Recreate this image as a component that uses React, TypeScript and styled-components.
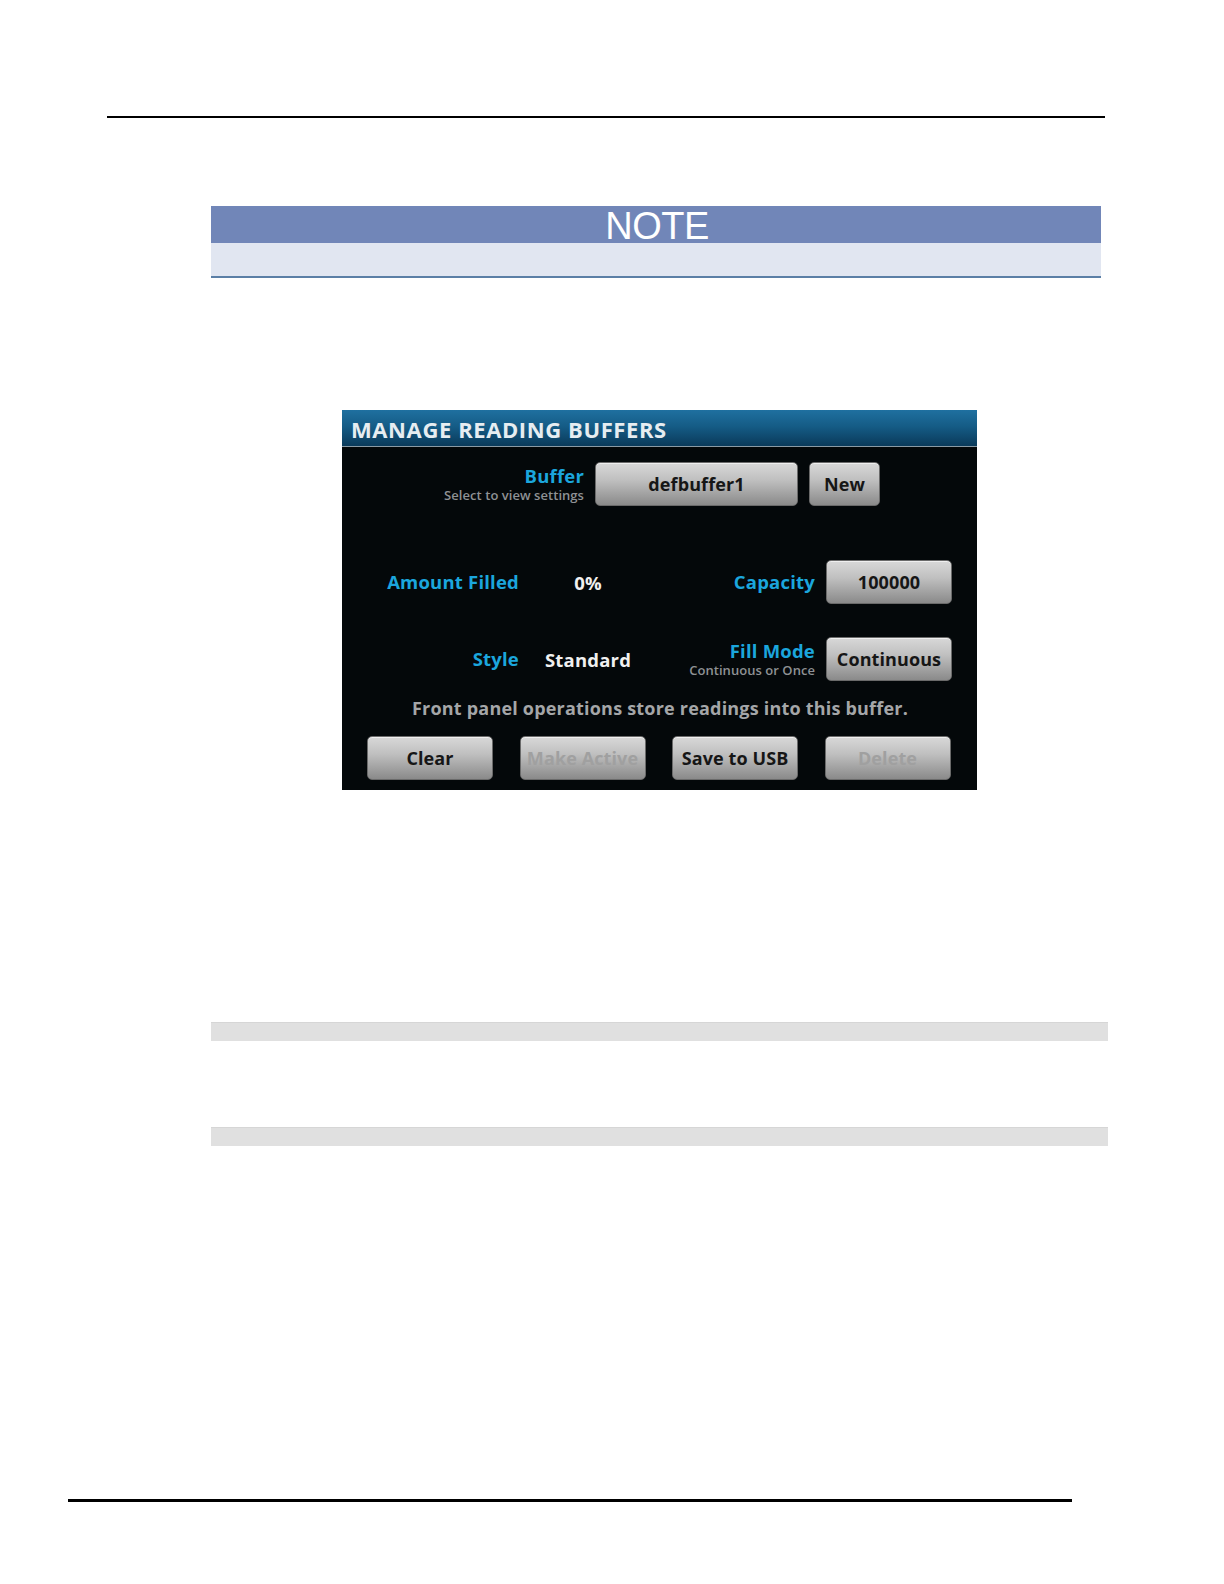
import * as React from 'react';
import styled, { createGlobalStyle } from 'styled-components';

const GlobalStyle = createGlobalStyle`
  html, body {
    margin: 0;
    padding: 0;
    background: #ffffff;
    overflow: hidden;
  }
`;

const Page = styled.div`
  width: 1224px;
  height: 1584px;
  display: flex;
  flex-direction: column;
  background: #fff;
  overflow: hidden;
  font-family: 'Liberation Sans', Arial, sans-serif;
`;

const Rule = styled.div<{ $top: number; $left: number; $width: number; $thick: number }>`
  margin-top: ${(p) => p.$top}px;
  margin-left: ${(p) => p.$left}px;
  width: ${(p) => p.$width}px;
  height: ${(p) => p.$thick}px;
  flex-shrink: 0;
  background: #000;
`;

const NoteBox = styled.div`
  margin-top: 88px;
  margin-left: 211px;
  width: 890px;
  flex-shrink: 0;
  border-bottom: 2px solid #5b7fa6;
`;

const NoteHead = styled.div`
  height: 37px;
  background: #7186b8;
  color: #fff;
  font-family: 'Liberation Sans Narrow', 'Liberation Sans', Arial, sans-serif;
  font-size: 38px;
  line-height: 40px;
  text-align: center;
  padding-left: 2px;
  letter-spacing: -0.5px;
`;

const NoteBody = styled.div`
  height: 33px;
  background: #e1e6f1;
`;

const Panel = styled.div`
  margin-top: 132px;
  margin-left: 342px;
  width: 635px;
  height: 380px;
  flex-shrink: 0;
  background: #04080a;
  font-family: 'Open Sans', 'Noto Sans', sans-serif;
  font-weight: 700;
  display: flex;
  flex-direction: column;
`;

const TitleBar = styled.div`
  height: 36px;
  background: linear-gradient(#1f70a0 0%, #155c86 45%, #0a3a5a 100%);
  border-bottom: 1px solid #8a9aa4;
  color: #e6edf1;
  font-size: 22px;
  line-height: 38px;
  padding-left: 9px;
  letter-spacing: 0.6px;
`;

const TopRow = styled.div`
  margin-top: 15px;
  display: grid;
  grid-template-columns: 242px 203px 71px;
  column-gap: 11px;
  height: 44px;
`;

const FieldRow = styled.div<{ $mt: number }>`
  margin-top: ${(p) => p.$mt}px;
  display: grid;
  grid-template-columns: 177px 138px 158px 126px;
  column-gap: 0;
  height: 44px;
  & > :nth-child(4) {
    margin-left: 11px;
  }
`;

const LabelCell = styled.div`
  display: flex;
  flex-direction: column;
  align-items: flex-end;
  justify-content: center;
`;

const Label = styled.div`
  color: #1ba6dd;
  font-size: 18.5px;
  line-height: 22px;
  letter-spacing: 0.2px;
`;

const SubLabel = styled.div`
  color: #8e9194;
  font-size: 13px;
  line-height: 17px;
  font-weight: 600;
  letter-spacing: 0.05px;
`;

const Value = styled.div`
  color: #f0f0f0;
  font-size: 18.5px;
  letter-spacing: 0.2px;
  display: flex;
  align-items: center;
  justify-content: center;
`;

const Key = styled.button<{ $disabled?: boolean }>`
  height: 44px;
  width: 100%;
  margin: 0;
  padding: 0;
  border: 1px solid #6a6a6a;
  border-radius: 5px;
  background: linear-gradient(#d8d8d8 0%, #c0c0c0 40%, #8a8a8a 100%);
  box-shadow: inset 0 1px 0 rgba(255, 255, 255, 0.6);
  color: ${(p) => (p.$disabled ? '#a0a0a0' : '#161616')};
  font-family: 'Open Sans', 'Noto Sans', sans-serif;
  font-weight: 700;
  font-size: 18px;
  letter-spacing: 0.1px;
  white-space: nowrap;
  overflow: hidden;
  cursor: pointer;
`;

const Info = styled.div`
  margin-top: 15px;
  height: 24px;
  line-height: 24px;
  text-align: center;
  color: #a4a6a8;
  font-size: 18px;
  letter-spacing: 0.2px;
  padding-left: 1px;
`;

const KeyRow = styled.div`
  margin-top: 16px;
  padding-left: 25px;
  display: grid;
  grid-template-columns: repeat(4, 126px);
  column-gap: 26.5px;
`;

const GrayBar = styled.div<{ $mt: number }>`
  margin-top: ${(p) => p.$mt}px;
  margin-left: 211px;
  width: 897px;
  height: 19px;
  flex-shrink: 0;
  background: #e0e0e0;
  border-top: 1px solid #d6d6d6;
  box-sizing: border-box;
`;

export default function App() {
  return (
    <Page>
      <GlobalStyle />
      <Rule $top={116} $left={107} $width={998} $thick={2} />
      <NoteBox>
        <NoteHead>NOTE</NoteHead>
        <NoteBody />
      </NoteBox>
      <Panel>
        <TitleBar>MANAGE READING BUFFERS</TitleBar>
        <TopRow>
          <LabelCell>
            <Label>Buffer</Label>
            <SubLabel>Select to view settings</SubLabel>
          </LabelCell>
          <Key>defbuffer1</Key>
          <Key>New</Key>
        </TopRow>
        <FieldRow $mt={54}>
          <LabelCell>
            <Label>Amount Filled</Label>
          </LabelCell>
          <Value>0%</Value>
          <LabelCell>
            <Label>Capacity</Label>
          </LabelCell>
          <Key>100000</Key>
        </FieldRow>
        <FieldRow $mt={33}>
          <LabelCell>
            <Label>Style</Label>
          </LabelCell>
          <Value>Standard</Value>
          <LabelCell>
            <Label>Fill Mode</Label>
            <SubLabel>Continuous or Once</SubLabel>
          </LabelCell>
          <Key>Continuous</Key>
        </FieldRow>
        <Info>Front panel operations store readings into this buffer.</Info>
        <KeyRow>
          <Key>Clear</Key>
          <Key $disabled>Make Active</Key>
          <Key>Save to USB</Key>
          <Key $disabled>Delete</Key>
        </KeyRow>
      </Panel>
      <GrayBar $mt={232} />
      <GrayBar $mt={86} />
      <Rule $top={353} $left={68} $width={1004} $thick={3} />
    </Page>
  );
}
